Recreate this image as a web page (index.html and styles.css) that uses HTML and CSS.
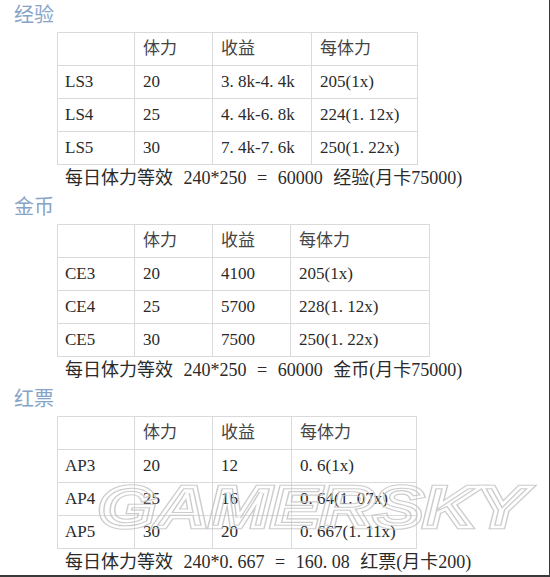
FILE: index.html
```html
<!DOCTYPE html>
<html lang="zh-CN">
<head>
<meta charset="utf-8">
<title>体力收益</title>
<link rel="stylesheet" href="styles.css">
</head>
<body>
<div class="page">
  <section class="sec">
    <h2 class="title">经验</h2>
    <table class="grid t1">
      <colgroup><col class="c1"><col class="c2"><col class="c3"><col class="c4"></colgroup>
      <tr><td></td><td>体力</td><td>收益</td><td>每体力</td></tr>
      <tr><td>LS3</td><td>20</td><td>3<span class="d">.</span>8k-4<span class="d">.</span>4k</td><td>205(1x)</td></tr>
      <tr><td>LS4</td><td>25</td><td>4<span class="d">.</span>4k-6<span class="d">.</span>8k</td><td>224(1<span class="d">.</span>12x)</td></tr>
      <tr><td>LS5</td><td>30</td><td>7<span class="d">.</span>4k-7<span class="d">.</span>6k</td><td>250(1<span class="d">.</span>22x)</td></tr>
    </table>
    <p class="sum">每日体力等效 240*250 = 60000 经验(月卡75000)</p>
  </section>
  <section class="sec">
    <h2 class="title">金币</h2>
    <table class="grid t2">
      <colgroup><col class="c1"><col class="c2"><col class="c3"><col class="c4"></colgroup>
      <tr><td></td><td>体力</td><td>收益</td><td>每体力</td></tr>
      <tr><td>CE3</td><td>20</td><td>4100</td><td>205(1x)</td></tr>
      <tr><td>CE4</td><td>25</td><td>5700</td><td>228(1<span class="d">.</span>12x)</td></tr>
      <tr><td>CE5</td><td>30</td><td>7500</td><td>250(1<span class="d">.</span>22x)</td></tr>
    </table>
    <p class="sum">每日体力等效 240*250 = 60000 金币(月卡75000)</p>
  </section>
  <section class="sec">
    <h2 class="title">红票</h2>
    <table class="grid t3">
      <colgroup><col class="c1"><col class="c2"><col class="c3"><col class="c4"></colgroup>
      <tr><td></td><td>体力</td><td>收益</td><td>每体力</td></tr>
      <tr><td>AP3</td><td>20</td><td>12</td><td>0<span class="d">.</span>6(1x)</td></tr>
      <tr><td>AP4</td><td>25</td><td>16</td><td>0<span class="d">.</span>64(1<span class="d">.</span>07x)</td></tr>
      <tr><td>AP5</td><td>30</td><td>20</td><td>0<span class="d">.</span>667(1<span class="d">.</span>11x)</td></tr>
    </table>
    <p class="sum">每日体力等效 240*0<span class="d">.</span>667 = 160<span class="d">.</span>08 红票(月卡200)</p>
  </section>
  <svg class="mark" width="450" height="56" viewBox="0 0 450 56" aria-hidden="true">
    <defs>
      <mask id="hollow" maskUnits="userSpaceOnUse" x="0" y="0" width="450" height="56">
        <rect x="0" y="0" width="450" height="56" fill="#fff"/>
        <text class="mk" x="8" y="47" textLength="428" lengthAdjust="spacingAndGlyphs" fill="none" stroke="#000" stroke-width="2.4">GAMERSKY</text>
      </mask>
    </defs>
    <text class="mk" x="8" y="47" textLength="428" lengthAdjust="spacingAndGlyphs" fill="none" stroke="#c4c4c4" stroke-width="4.6" mask="url(#hollow)">GAMERSKY</text>
  </svg>
</div>
</body>
</html>
```

FILE: styles.css
```css
html, body {
  margin: 0;
  padding: 0;
  background: #ffffff;
}

.page {
  position: relative;
  width: 550px;
  height: 577px;
  box-sizing: border-box;
  border-right: 1px solid #3a3a3a;
  border-bottom: 2px solid #3a3a3a;
  overflow: hidden;
  font-family: "Liberation Serif", "Noto Sans CJK SC", serif;
  color: #2a2a2a;
}

.sec {
  display: flex;
  flex-direction: column;
  height: 192px;
}

.title {
  margin: 0 0 4px 0;
  padding-left: 14px;
  height: 28px;
  line-height: 28px;
  font-family: "Noto Sans CJK SC", sans-serif;
  font-weight: 400;
  font-size: 20px;
  color: #86a4c8;
}

.grid {
  margin-left: 57px;
  border-collapse: collapse;
  table-layout: fixed;
  font-size: 17px;
}

.grid td {
  border: 1px solid #dadada;
  height: 32px;
  padding: 0 0 0 7px;
  box-sizing: border-box;
  white-space: nowrap;
  line-height: 32px;
}

.grid tr { height: 33px; }

.grid td:nth-child(n+2) { padding-left: 8px; }

.grid tr:first-child td { color: #444; }

.c1 { width: 77px; }
.c2 { width: 78px; }
.t1 { width: 361px; }
.t1 .c3 { width: 99px; }
.t1 .c4 { width: 106px; }
.t2 { width: 373px; }
.t2 .c3 { width: 78px; }
.t2 .c4 { width: 139px; }
.t3 { width: 360px; }
.t3 .c3 { width: 79px; }
.t3 .c4 { width: 125px; }

.d {
  display: inline-block;
  width: 0.5em;
}

.sum {
  margin: 0;
  padding-left: 65px;
  height: 27px;
  line-height: 27px;
  font-size: 18px;
  word-spacing: 6px;
  white-space: nowrap;
  color: #2a2a2a;
}

.mark {
  position: absolute;
  left: 90px;
  top: 480px;
  pointer-events: none;
  opacity: 0.85;
}

.mk {
  font-family: "Liberation Sans", sans-serif;
  font-weight: 700;
  font-style: italic;
  font-size: 57px;
}
```
